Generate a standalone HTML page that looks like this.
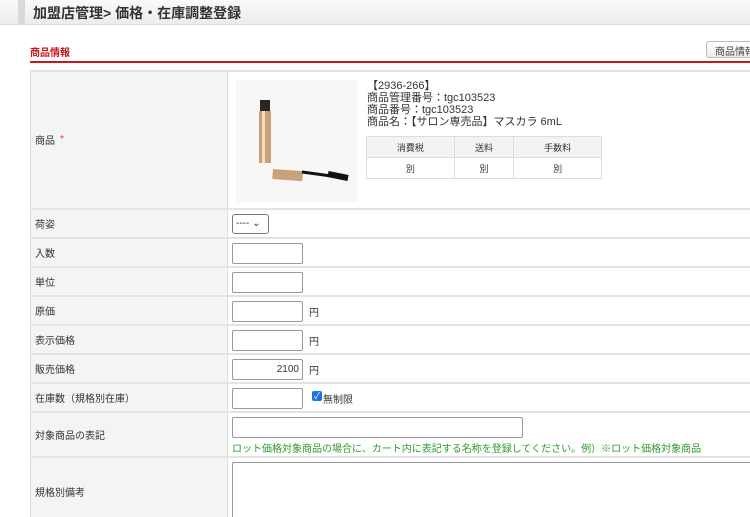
<!DOCTYPE html>
<html><head><meta charset="utf-8"><style>
*{box-sizing:border-box;margin:0;padding:0}
html,body{width:750px;height:517px;overflow:hidden}
body{background:#fff;font-family:"Liberation Sans","Noto Sans CJK JP",sans-serif;color:#333;position:relative;font-size:10px}
.hdr{position:absolute;left:0;top:0;width:750px;height:25px;background:linear-gradient(#fafafa,#ececec);border-bottom:1px solid #ddd}
.stripe{position:absolute;left:18px;top:0;width:7px;height:24px;background:repeating-linear-gradient(45deg,#ccc 0 1px,#e8e8e8 1px 2px)}
.title{position:absolute;left:33px;top:3px;font-size:14px;font-weight:bold;color:#333}
.sec{position:absolute;left:30px;top:44px;font-size:10px;font-weight:bold;color:#c8161d}
.red{position:absolute;left:30px;top:61px;width:720px;height:2px;background:#d0141c}
.btn{position:absolute;left:706px;top:41px;width:60px;height:17px;border:1px solid #bbb;border-radius:3px;background:linear-gradient(#fff,#eee);font-size:10px;padding:1px 0 0 8px;color:#444}
.row{position:absolute;left:30px;width:720px;border-top:2px solid #e3e3e3}
.lab{position:absolute;left:0;top:0;bottom:0;width:198px;background:#f3f4f4;border-left:1px solid #ddd;border-right:1px solid #ddd;display:flex;align-items:center;padding-left:4px;padding-bottom:2px;font-size:10px}
.inp{position:absolute;left:202px;width:71px;height:21px;border:1px solid #999;border-radius:2px;background:#fff;font-size:10px;text-align:right;padding:4px 3px 0 0}
.yen{position:absolute;left:279px;font-size:10px}
.pt{position:absolute;left:367px;font-size:11px;line-height:12px}
table.s{position:absolute;left:366px;top:136px;width:236px;border-collapse:collapse;font-size:9px;text-align:center}
table.s td{border:1px solid #ddd;height:21px}
table.s tr:first-child td{background:#f3f3f3}
</style></head><body>
<div class="hdr"></div><div class="stripe"></div>
<div class="title">加盟店管理&gt; 価格・在庫調整登録</div>
<div class="sec">商品情報</div>
<div class="btn">商品情報</div>
<div class="red"></div>

<div class="row" style="top:70px;height:139px"><div class="lab">商品 <span style="color:#e33;margin-left:5px">*</span></div></div>
<svg style="position:absolute;left:236px;top:80px" width="122" height="122">
<rect width="122" height="122" fill="#f8f7f6"/>
<rect x="24" y="20" width="10" height="12" fill="#2a2422"/>
<rect x="23" y="31" width="12" height="52" fill="#c9a07a"/>
<rect x="26" y="31" width="3" height="52" fill="#f3dcc0"/>
<rect x="37" y="89" width="30" height="10" fill="#c9a27a" transform="rotate(4 37 89)"/>
<path d="M66 92 L110 98" stroke="#111" stroke-width="3"/>
<path d="M92 94 L112 98" stroke="#111" stroke-width="6"/>
</svg>
<div class="pt" style="top:80px">【2936-266】<br>商品管理番号：tgc103523<br>商品番号：tgc103523<br>商品名：【サロン専売品】マスカラ 6mL</div>
<table class="s"><tr><td>消費税</td><td>送料</td><td>手数料</td></tr><tr><td>別</td><td>別</td><td>別</td></tr></table>

<div class="row" style="top:208px;height:30px"><div class="lab">荷姿</div>
<div style="position:absolute;left:202px;top:4px;width:37px;height:20px;border:1px solid #777;border-radius:3px;background:#fff;font-size:10px;padding:3px 0 0 3px">---- ⌄</div></div>
<div class="row" style="top:237px;height:30px"><div class="lab">入数</div><div class="inp" style="top:4px"></div></div>
<div class="row" style="top:266px;height:30px"><div class="lab">単位</div><div class="inp" style="top:4px"></div></div>
<div class="row" style="top:295px;height:30px"><div class="lab">原価</div><div class="inp" style="top:4px"></div><div class="yen" style="top:7px">円</div></div>
<div class="row" style="top:324px;height:30px"><div class="lab">表示価格</div><div class="inp" style="top:4px"></div><div class="yen" style="top:7px">円</div></div>
<div class="row" style="top:353px;height:30px"><div class="lab">販売価格</div><div class="inp" style="top:4px">2100</div><div class="yen" style="top:7px">円</div></div>
<div class="row" style="top:382px;height:30px"><div class="lab">在庫数（規格別在庫）</div><div class="inp" style="top:4px"></div>
<div style="position:absolute;left:282px;top:7px;width:10px;height:10px;background:#1a73e8;border-radius:2px;color:#fff;font-size:9px;line-height:10px;text-align:center">✓</div><div style="position:absolute;left:293px;top:7px">無制限</div></div>
<div class="row" style="top:411px;height:46px"><div class="lab">対象商品の表記</div>
<div class="inp" style="top:4px;width:291px"></div>
<div style="position:absolute;left:202px;top:27px;color:#2e9a2e;font-size:10px">ロット価格対象商品の場合に、カート内に表記する名称を登録してください。例）※ロット価格対象商品</div></div>
<div class="row" style="top:456px;height:70px"><div class="lab">規格別備考</div>
<div class="inp" style="top:4px;width:530px;height:70px"></div></div>
</body></html>
